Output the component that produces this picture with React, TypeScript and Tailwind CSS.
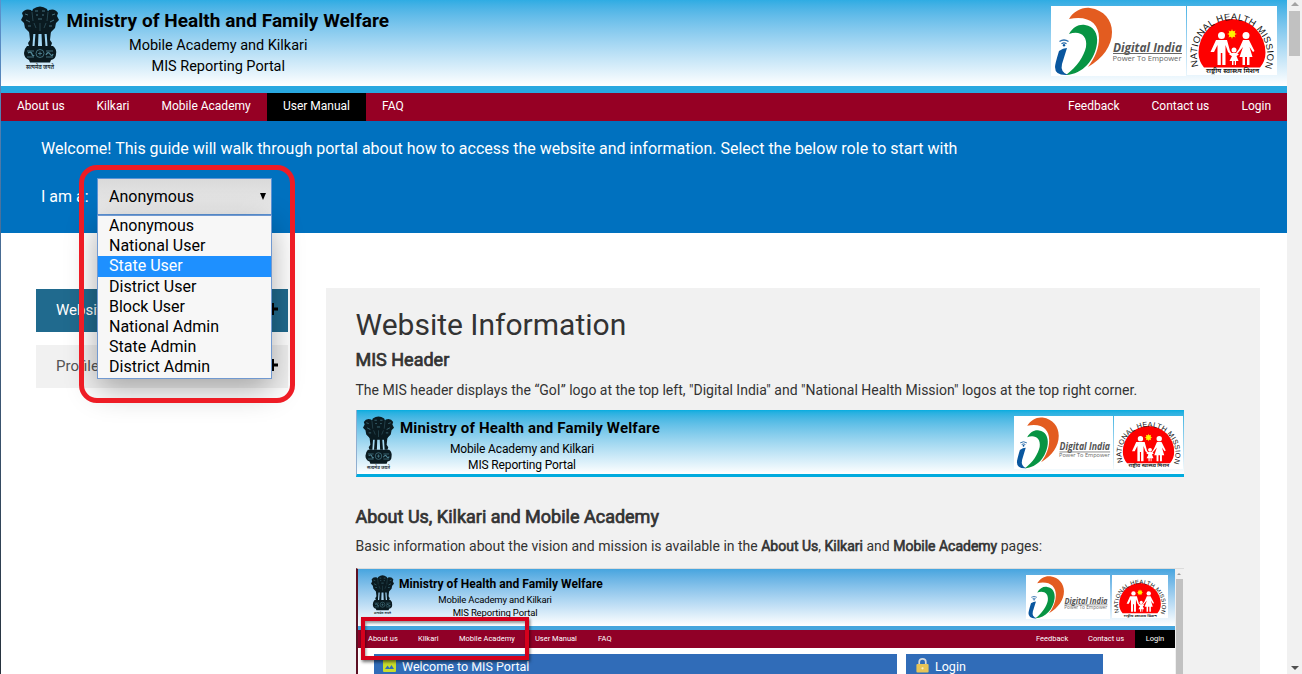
import React from "react";

function Emblem({ className }: { className: string }) {
  return (
    <svg viewBox="0 0 38 64" preserveAspectRatio="none" className={className}>
      <g fill="#0a1a20">
        <path d="M12 3Q19-2 26 3L28 8L27 17L24 22H14L11 17L10 8Z" />
        <path d="M10 4Q4 2 1 7L2 10L0 14L3 17L4 22L9 27H16V12Z" />
        <path d="M28 4Q34 2 37 7L36 10L38 14L35 17L34 22L29 27H22V12Z" />
        <path d="M11 16H27L28 28H10Z" />
        <path d="M8 25H12.500L11.500 40H8L7 37L9 34ZM14.500 27H17.500L17 40H13.500ZM20.500 27H23.500L24.500 40H21ZM25.500 25H30L29 34L31 37L30 40H26.500Z" />
        <path d="M6 40H32Q36 43 35 48Q35 53 30 54L29 56.500H9L8 54Q3 52 3 47Q3 43 6 40Z" />
      </g>
      <g stroke="#6fb4c8" fill="none" strokeWidth=".8" opacity=".7">
        <path d="M14 5H17M21 5H24M15 9H17M21 9H23M17 13H21M4 8L7 9M31 9L34 8M5 14L9 16M29 16L33 14M7 20L10 20M28 20L31 20" />
        <path d="M11 6L12 15M27 6L26 15M13 17L15 22M25 17L23 22M19 17V25" opacity=".5" />
        <circle cx="19" cy="47.500" r="4" />
        <path d="M17 47.500H21M19 45.500V49.500M6 45H13M6 51H13M25 45H32M25 51H32" />
        <path d="M7 47Q10 45 11 48T13 49M25 49Q27 45 29 48T32 48" strokeWidth="1.300" />
      </g>
      <text x="5" y="62.500" fontSize="6" fontWeight="600" textLength="28" lengthAdjust="spacingAndGlyphs" fill="#14262c" className="font-['Noto_Sans',sans-serif]">सत्यमेव जयते</text>
    </svg>
  );
}

function DigitalIndia({ className }: { className: string }) {
  return (
    <svg viewBox="0 0 135 70" preserveAspectRatio="none" className={className}>
      <rect width="135" height="70" fill="#fff" />
      <path d="M18 13C23 5 31 1 39 2C53 4 61 14 61 26C61 40 52 52 37 61C44 52 48 42 48 32C48 17 37 9 18 13Z" fill="#e35c20" />
      <path d="M18 28C22 21 28 18 34 19C43 20 47 28 46 37C44 54 32 68 15 69C26 61 33 50 35 41C37 29 28 24 18 28Z" fill="#079443" />
      <path d="M8 45Q12 42 16 42L11 58Q9 66 17 69Q4 70 4 61Q4 58 8 45Z" fill="#0a579f" />
      <g fill="none" stroke="#2a6cab" strokeWidth="1.300">
        <path d="M8.500 35.500Q13 32.500 17.500 35.500M10.500 37.700Q13 36 15.500 37.700" />
      </g>
      <circle cx="13" cy="39.300" r="1.200" fill="#0a579f" />
      <text x="62" y="45.500" fontSize="13" fontWeight="700" fontStyle="italic" textLength="69" lengthAdjust="spacingAndGlyphs" fill="#555" className="font-['Open_Sans',sans-serif]">Digital India</text>
      <path d="M62 47.500H131" stroke="#666" strokeWidth="1" />
      <text x="61.500" y="54.500" fontSize="7.500" textLength="69" lengthAdjust="spacingAndGlyphs" fill="#666" className="font-['Open_Sans',sans-serif]">Power To Empower</text>
    </svg>
  );
}

function HealthMission({ className, arcId }: { className: string; arcId: string }) {
  return (
    <svg viewBox="0 0 90 69" preserveAspectRatio="none" className={className}>
      <rect width="90" height="69" fill="#fff" />
      <path d="M17 61.500Q11.500 55 11.500 46.500A33.500 33.500 0 0 1 78.500 46.500Q78.500 55 73 61.500Z" fill="#fe0000" />
      <path id={arcId} d="M11.500 60A35.200 35.200 0 1 1 78.500 60" fill="none" />
      <text fontSize="9.400" fill="#111" className="font-['Liberation_Sans',sans-serif]">
        <textPath href={`#${arcId}`} textLength="134" lengthAdjust="spacing">NATIONAL HEALTH MISSION</textPath>
      </text>
      <path d="M45 23L46 25.500L48.500 24.500L47.500 27L50 28L47.500 29L48.500 31.500L46 30.500L45 33L44 30.500L41.500 31.500L42.500 29L40 28L42.500 27L41.500 24.500L44 25.500Z" fill="#ffe000" />
      <circle cx="45" cy="28" r="3" fill="#fff200" />
      <g fill="#fff">
        <circle cx="34.500" cy="29.500" r="3.500" />
        <path d="M29 34H40L43 45L46 49L45 50L41 46L38.500 39V59H35.300V47H33.800V59H30.500V39L27 46H23.500Z" />
        <circle cx="59" cy="29.500" r="3.500" />
        <path d="M56 34H62L67.500 45L66 46L62.500 41L65.500 51H62.500V59H60V51H58V59H55.500V51H52.500L56 41L51 47L48.500 50L47.500 49L52 43Z" />
        <circle cx="47" cy="44" r="2.500" />
        <path d="M45 47H49L52 48.500L49.500 50L51.500 55H49V59H47.800V55H46.500V59H45V55H42.500L45 50L42 48.500Z" />
      </g>
      <text x="19" y="67" fontSize="6" fontWeight="600" textLength="53" lengthAdjust="spacingAndGlyphs" fill="#111" className="font-['Noto_Sans',sans-serif]">राष्ट्रीय स्वास्थ्य मिशन</text>
    </svg>
  );
}

const roles = ["Anonymous", "National User", "State User", "District User", "Block User", "National Admin", "State Admin", "District Admin"];

function Header() {
  return (
    <header className="flex h-[93px] items-start border-b-[7px] border-[#29a8e0] bg-linear-to-b from-[#2eace3] to-white pt-1.5 pl-[20px]">
      <Emblem className="h-[64px] w-[38px]" />
      <div className="ml-[7.500px] w-[323.500px] whitespace-nowrap text-black">
        <h1 className="h-[29px] pt-px text-[19px] leading-[28px] font-bold tracking-[0.050px]">Ministry of Health and Family Welfare</h1>
        <div className="mr-[20px] text-center text-[14.500px] leading-[21px] tracking-[-0.020px]">
          <p>Mobile Academy and Kilkari</p>
          <p>MIS Reporting Portal</p>
        </div>
      </div>
      <div className="mr-[10px] ml-auto flex gap-px">
        <DigitalIndia className="h-[70px] w-[135px]" />
        <HealthMission className="h-[69px] w-[90px]" arcId="arc-main" />
      </div>
    </header>
  );
}

function Nav() {
  return (
    <nav className="flex h-[28px] bg-[#960024] text-[12px] leading-[26px] whitespace-nowrap text-white">
      <a className="w-[79.500px] pl-4">About us</a>
      <a className="w-[65px] pl-4">Kilkari</a>
      <a className="w-[121.500px] pl-4">Mobile Academy</a>
      <a className="w-[99px] bg-black text-center">User Manual</a>
      <a className="pl-4">FAQ</a>
      <a className="ml-auto w-[83.500px]">Feedback</a>
      <a className="w-[90px]">Contact us</a>
      <a className="w-[45.500px]">Login</a>
    </nav>
  );
}

function RoleSelect() {
  return (
    <div className="relative ml-[8px] w-[175px] text-black">
      <div className="flex h-[37px] items-center justify-between border border-[#5b93d6] bg-linear-to-b from-[#dadada] to-[#ececec] pr-[5px] pl-[11px]">
        <span>Anonymous</span>
        <svg viewBox="0 0 6 7" className="h-[7px] w-[6px]"><path d="M0 0H6L3 7Z" /></svg>
      </div>
      <ul className="absolute top-[37px] left-0 z-20 h-[164px] w-[175px] border border-[#7199d0] bg-[#f7f7f7] shadow-[0_10px_30px_rgba(0,0,0,0.33)]">
        {roles.map((role) => (
          <li key={role} className={role === "State User" ? "h-[21px] bg-[#1e90ff] pl-[11px] leading-[19px] text-white" : "h-[20px] pl-[11px] leading-[20px]"}>{role}</li>
        ))}
      </ul>
      <div className="pointer-events-none absolute -top-[13px] -left-[18px] z-30 h-[238px] w-[216px] rounded-[18px] border-[5px] border-[#ee1c25]" />
    </div>
  );
}

function SideItem({ label, className }: { label: string; className: string }) {
  return (
    <div className={className}>
      <span>{label}</span>
      <svg viewBox="0 0 12 12" className="mb-[4px] h-[12px] w-[12px]"><path d="M6.500 0V12M1 6H12" stroke="#000" strokeWidth="3" /></svg>
    </div>
  );
}

function HeaderFigure() {
  return (
    <div className="mt-[10px] ml-[0.500px] flex h-[67px] w-[828px] items-start border-b-[3px] border-l border-b-[#00abde] border-l-[#8faed0] bg-linear-to-b from-[#03addf] to-white pt-[6px] pl-[6px] text-black">
      <Emblem className="h-[54px] w-[31px]" />
      <div className="ml-[6px] w-[261px] whitespace-nowrap">
        <p className="h-[22px] text-[15px] leading-[24px] font-bold tracking-[0.180px]">Ministry of Health and Family Welfare</p>
        <div className="mr-[17px] pt-[2.500px] text-center text-[12px] leading-[16.500px] tracking-[-0.150px]">
          <p>Mobile Academy and Kilkari</p>
          <p>MIS Reporting Portal</p>
        </div>
      </div>
      <div className="mr-px ml-auto flex gap-px">
        <DigitalIndia className="h-[53px] w-[99px]" />
        <HealthMission className="h-[53px] w-[69px]" arcId="arc-figure" />
      </div>
    </div>
  );
}

function PortalFigure() {
  return (
    <div className="relative mt-[12px] ml-[0.500px] flex h-[110px] w-[828px] border-t border-l-2 border-t-[#dcdcdc] border-l-[#5c1023] text-black">
      <div className="flex w-[817px] flex-col bg-white">
        <div className="flex h-[61px] shrink-0 items-start border-b-[4px] border-[#45a5dd] bg-linear-to-b from-[#46a5df] to-white pt-[6px] pl-[13px]">
          <Emblem className="h-[40px] w-[23px]" />
          <div className="ml-[5px] w-[206px] whitespace-nowrap">
            <p className="h-[17px] text-[12px] leading-[19px] font-bold tracking-[0.030px]">Ministry of Health and Family Welfare</p>
            <div className="mr-[14px] pt-px text-center text-[9.500px] leading-[13px] tracking-[-0.150px]">
              <p>Mobile Academy and Kilkari</p>
              <p>MIS Reporting Portal</p>
            </div>
          </div>
          <div className="mr-[7px] ml-auto flex gap-[2px]">
            <DigitalIndia className="h-[44px] w-[84px]" />
            <HealthMission className="h-[43px] w-[56px]" arcId="arc-portal" />
          </div>
        </div>
        <div className="flex h-[18px] shrink-0 bg-[#900027] text-[7.500px] leading-[17px] whitespace-nowrap text-white">
          <span className="w-[50px] pl-[10px]">About us</span>
          <span className="w-[41px] pl-[10px]">Kilkari</span>
          <span className="w-[76px] pl-[10px]">Mobile Academy</span>
          <span className="w-[63px] pl-[10px]">User Manual</span>
          <span className="pl-[10px]">FAQ</span>
          <span className="ml-auto w-[52px]">Feedback</span>
          <span className="w-[47px]">Contact us</span>
          <span className="w-[40px] bg-black text-center">Login</span>
        </div>
        <div className="flex gap-[9px] pt-[6px] pl-[16px] text-[12.500px] leading-[25px] text-white">
          <div className="flex h-[30px] w-[523px] bg-[#306cb8] pl-[9px]">
            <svg viewBox="0 0 13 13" className="mt-[5px] h-[13px] w-[13px]"><rect width="13" height="13" rx="1" fill="#c9dc2c" /><path d="M2 10L4.500 6.500L6.500 9L8.500 6L11 10Z" fill="#306cb8" /></svg>
            <span className="ml-[6px]">Welcome to MIS Portal</span>
          </div>
          <div className="flex h-[30px] w-[197px] bg-[#306cb8] pl-[10px]">
            <svg viewBox="0 0 13 16" className="mt-[4px] h-[15px] w-[13px]"><path d="M3 7V4Q3 1 6.500 1T10 4V7" fill="none" stroke="#d5d9dc" strokeWidth="1.800" /><rect y="6.500" width="13" height="9" rx="1" fill="#e8c456" /><circle cx="6.500" cy="11" r="1.200" fill="#fff3c0" /></svg>
            <span className="ml-[6px]">Login</span>
          </div>
        </div>
      </div>
      <div className="flex w-[8px] flex-col items-center bg-[#f0f0f0] pt-[4px]">
        <svg viewBox="0 0 4 2" className="h-[2px] w-[4px]"><path d="M0 2L2 0L4 2Z" fill="#999" /></svg>
        <div className="mt-[4px] w-[7px] grow bg-[#c1c1c1]" />
      </div>
      <div className="absolute top-[48px] left-[3px] h-[43px] w-[168px] border-[4px] border-[#d5001c] shadow-[1px_2px_3px_rgba(0,0,0,0.55),inset_1px_2px_3px_rgba(0,0,0,0.4)]" />
    </div>
  );
}

export default function App() {
  return (
    <div className="flex h-[674px] w-[1302px] overflow-hidden bg-white font-[Roboto,sans-serif]">
      <div className="w-px bg-linear-to-b from-[#5c92cd] to-[#26313c]" />
      <div className="flex w-[1286px] flex-col">
        <Header />
        <Nav />
        <section className="h-[112px] shrink-0 bg-[#0071bf] pt-[16px] pl-[40px] text-[16px] text-white">
          <p className="leading-[24px]">Welcome! This guide will walk through portal about how to access the website and information. Select the below role to start with</p>
          <div className="mt-[17px] flex">
            <span className="w-[48px] leading-[37px] whitespace-nowrap">I am a:</span>
            <RoleSelect />
          </div>
        </section>
        <main className="flex grow items-start pt-[55px] pl-[35px]">
          <aside className="flex w-[252px] flex-col gap-[13px] pt-px text-[15px]">
            <SideItem label="Website" className="flex h-[43px] items-center justify-between bg-[#206a8e] pr-[10px] pl-[20px] text-white" />
            <SideItem label="Profile" className="flex h-[43px] items-center justify-between bg-[#f1f1f1] pr-[10px] pl-[20px] text-[#555]" />
          </aside>
          <article className="ml-[38px] h-[386px] w-[934px] overflow-hidden bg-[#f1f1f1] pt-[20px] pl-[29.500px] text-[#333]">
            <h2 className="text-[30px] leading-[34px]">Website Information</h2>
            <h3 className="mt-[6px] text-[18px] leading-[24px] [-webkit-text-stroke:0.700px_#333]">MIS Header</h3>
            <p className="mt-[8px] text-[14px] leading-[20px]">The MIS header displays the “GoI” logo at the top left, "Digital India" and "National Health Mission" logos at the top right corner.</p>
            <HeaderFigure />
            <h3 className="mt-[28px] text-[18px] leading-[24px] [-webkit-text-stroke:0.700px_#333]">About Us, Kilkari and Mobile Academy</h3>
            <p className="mt-[7px] text-[14px] leading-[20px]">Basic information about the vision and mission is available in the <b className="font-normal [-webkit-text-stroke:0.600px_#333]">About Us</b>, <b className="font-normal [-webkit-text-stroke:0.600px_#333]">Kilkari</b> and <b className="font-normal [-webkit-text-stroke:0.600px_#333]">Mobile Academy</b> pages:</p>
            <PortalFigure />
          </article>
        </main>
      </div>
      <div className="flex w-[15px] flex-col items-center bg-[#f1f1f1] pt-[2px] pb-[4px]">
        <svg viewBox="0 0 8 4" className="h-[4px] w-[8px]"><path d="M0 4L4 0L8 4Z" fill="#a3a3a3" /></svg>
        <div className="mt-[5px] h-[45px] w-[11px] bg-[#c1c1c1]" />
        <svg viewBox="0 0 8 4" className="mt-auto h-[4px] w-[8px]"><path d="M0 0H8L4 4Z" fill="#505050" /></svg>
      </div>
    </div>
  );
}
